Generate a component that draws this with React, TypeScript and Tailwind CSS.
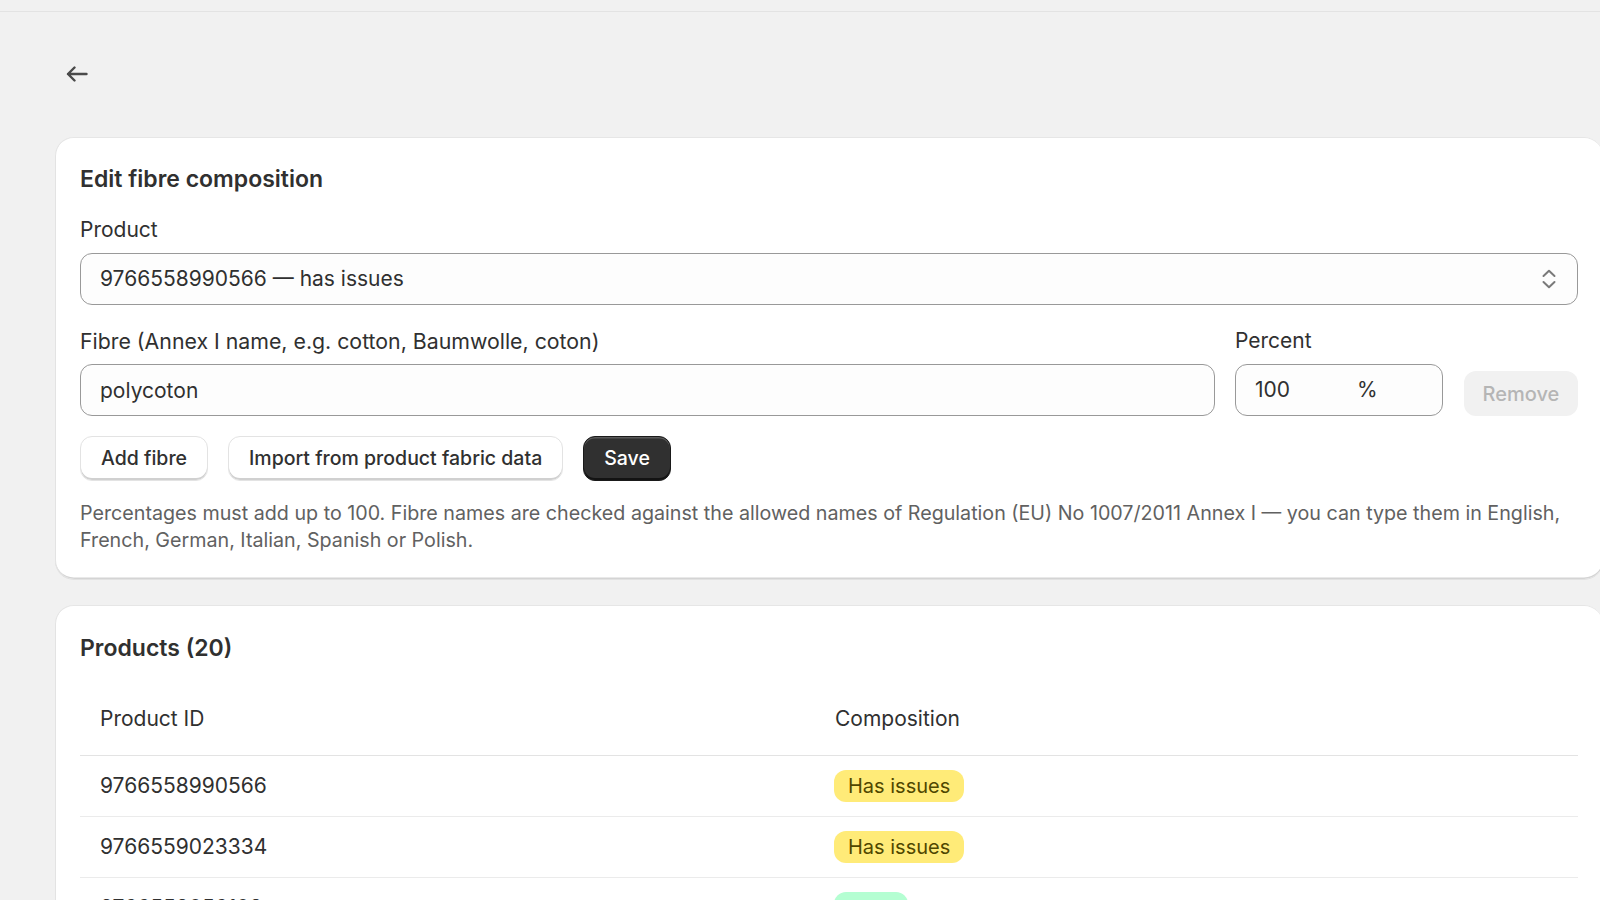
import { useState } from "react";

const rows = [
	{ id: "9766558990566", status: "issues" },
	{ id: "9766559023334", status: "issues" },
	{ id: "9766559056102", status: "valid" },
	{ id: "9766559088870", status: "valid" },
];

function BackArrow() {
	return (
		<svg width="22" height="16" viewBox="0 0 22 16" fill="none" aria-hidden>
			<path
				d="M20.5 8H2M8.5 1.5 2 8l6.5 6.5"
				stroke="#4a4a4a"
				strokeWidth="2.4"
				strokeLinecap="round"
				strokeLinejoin="round"
			/>
		</svg>
	);
}

function SelectIcon() {
	return (
		<svg width="16" height="20" viewBox="0 0 16 20" fill="none" aria-hidden>
			<path
				d="M2.5 7 8 1.8 13.5 7M2.5 13 8 18.2 13.5 13"
				stroke="#7a7a7a"
				strokeWidth="2"
				strokeLinecap="round"
				strokeLinejoin="round"
			/>
		</svg>
	);
}

function Badge({ status }: { status: string }) {
	if (status === "issues") {
		return (
			<span className="inline-flex h-[32px] items-center rounded-[12px] bg-[#ffeb78] px-[14px] text-[20px] text-[#4f4700]">
				Has issues
			</span>
		);
	}
	return (
		<span className="inline-flex h-[32px] items-center rounded-[12px] bg-[#b4fed2] px-[14px] text-[20px] text-[#0c5132]">
			Valid
		</span>
	);
}

const card =
	"w-[1548px] rounded-[19px] bg-white px-[25px] shadow-[inset_0_1px_0_#e6e6e6,inset_1px_0_0_#e3e3e3,inset_0_-1.5px_0_#d4d4d4,0_1px_0_rgba(26,26,26,0.07)]";

const secondaryBtn =
	"h-[45px] rounded-[12px] border border-[#e3e3e3] bg-white px-[20px] text-[19.5px] font-medium text-[#303030] shadow-[inset_0_-2px_0_#d0d0d0]";

export default function App() {
	const [fibre, setFibre] = useState("polycoton");
	const [percent, setPercent] = useState("100");

	return (
		<div className="h-[900px] overflow-hidden bg-[#f1f1f1] font-['Inter','Noto_Sans',sans-serif] text-[#303030]">
			<div className="h-[12px] border-b border-[#e3e3e3]" />
			<div className="pl-[55px]">
				<div className="pt-[46px] pb-[47px]">
					<button
						type="button"
						aria-label="Back"
						className="flex h-[32px] w-[44px] items-center justify-center"
					>
						<BackArrow />
					</button>
				</div>

				<section className={`${card} pt-[27px] pb-[25px]`}>
					<h2 className="text-[23px] leading-[30px] font-semibold">
						Edit fibre composition
					</h2>

					<div className="mt-[21px]">
						<p className="mb-[8px] text-[21px] leading-[30px]">Product</p>
						<div className="flex h-[52px] items-center justify-between rounded-[12px] border border-[#999] bg-[#fdfdfd] pr-[20px] pl-[19px] text-[21px]">
							<span>9766558990566 — has issues</span>
							<SelectIcon />
						</div>
					</div>

					<div className="mt-[21px] flex items-end">
						<label className="block flex-1">
							<span className="mb-[8px] block text-[21.3px] leading-[30px]">
								Fibre (Annex I name, e.g. cotton, Baumwolle, coton)
							</span>
							<input
								value={fibre}
								onChange={(e) => setFibre(e.target.value)}
								className="h-[52px] w-full rounded-[12px] border border-[#999] bg-[#fdfdfd] px-[19px] text-[21px] outline-none"
							/>
						</label>
						<label className="ml-[20px] block w-[208px]">
							<span className="mb-[8px] block text-[21px] leading-[30px]">
								Percent
							</span>
							<div className="flex h-[52px] items-center rounded-[12px] border border-[#999] bg-[#fdfdfd] pl-[19px] text-[21px]">
								<input
									value={percent}
									onChange={(e) => setPercent(e.target.value)}
									className="w-[102px] bg-transparent outline-none"
								/>
								<span>%</span>
							</div>
						</label>
						<button
							type="button"
							disabled
							className="ml-[21px] h-[45px] w-[114px] rounded-[12px] bg-[#f1f1f1] text-[20px] font-medium text-[#b5b5b5]"
						>
							Remove
						</button>
					</div>

					<div className="mt-[20px] flex gap-[20px]">
						<button type="button" className={secondaryBtn}>
							Add fibre
						</button>
						<button type="button" className={secondaryBtn}>
							Import from product fabric data
						</button>
						<button
							type="button"
							className="h-[45px] rounded-[12px] border border-[#1a1a1a] bg-[#303030] px-[20px] text-[19.5px] font-medium text-white shadow-[inset_0_1.5px_0_rgba(255,255,255,0.2),inset_0_-2px_0_rgba(0,0,0,0.6)]"
						>
							Save
						</button>
					</div>

					<p className="mt-[19px] text-[19.7px] leading-[27px] text-[#616161]">
						Percentages must add up to 100. Fibre names are checked against the
						allowed names of Regulation (EU) No 1007/2011 Annex I — you can type
						them in English, French, German, Italian, Spanish or Polish.
					</p>
				</section>

				<section className={`mt-[26px] ${card} pt-[28px] pb-[24px]`}>
					<h2 className="text-[23px] leading-[30px] font-semibold">
						Products (20)
					</h2>
					<table className="mt-[19px] w-full border-collapse text-[21px]">
						<colgroup>
							<col className="w-[735px]" />
							<col />
						</colgroup>
						<thead>
							<tr className="h-[73px] border-b-[1.5px] border-[#e3e3e3]">
								<th className="pl-[20px] text-left font-normal">Product ID</th>
								<th className="pl-[20px] text-left font-normal">Composition</th>
							</tr>
						</thead>
						<tbody>
							{rows.map((r) => (
								<tr key={r.id} className="h-[61px] border-b-[1.5px] border-[#ebebeb]">
									<td className="pl-[20px]">{r.id}</td>
									<td className="pl-[19px]">
										<Badge status={r.status} />
									</td>
								</tr>
							))}
						</tbody>
					</table>
				</section>
			</div>
		</div>
	);
}
